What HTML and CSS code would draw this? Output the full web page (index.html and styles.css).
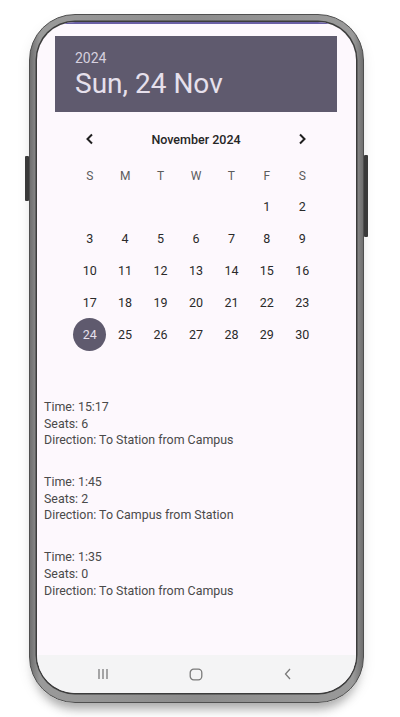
FILE: index.html
```html
<!DOCTYPE html>
<html>
<head>
<meta charset="utf-8">
<link rel="stylesheet" href="styles.css">
</head>
<body>
<div class="stage">
  <div class="phone">
    <span class="btn btn-left"></span>
    <span class="btn btn-right"></span>
    <div class="screen">
      <div class="topline"></div>
      <div class="header">
        <div class="year">2024</div>
        <div class="date">Sun, 24 Nov</div>
      </div>
      <div class="calendar">
        <div class="month-row">
          <span class="chev"><svg width="10" height="12" viewBox="0 0 10 12"><path d="M7 1.5 L2.5 6 L7 10.5" fill="none" stroke="#1f1f1f" stroke-width="2"/></svg></span>
          <span class="month">November 2024</span>
          <span class="chev"><svg width="10" height="12" viewBox="0 0 10 12"><path d="M3 1.5 L7.5 6 L3 10.5" fill="none" stroke="#1f1f1f" stroke-width="2"/></svg></span>
        </div>
        <div class="grid weekdays">
          <span>S</span><span>M</span><span>T</span><span>W</span><span>T</span><span>F</span><span>S</span>
        </div>
        <div class="grid days">
          <span></span><span></span><span></span><span></span><span></span><span>1</span><span>2</span>
          <span>3</span><span>4</span><span>5</span><span>6</span><span>7</span><span>8</span><span>9</span>
          <span>10</span><span>11</span><span>12</span><span>13</span><span>14</span><span>15</span><span>16</span>
          <span>17</span><span>18</span><span>19</span><span>20</span><span>21</span><span>22</span><span>23</span>
          <span><b class="sel">24</b></span><span>25</span><span>26</span><span>27</span><span>28</span><span>29</span><span>30</span>
        </div>
      </div>
      <div class="list">
        <div class="item">
          <div>Time: 15:17</div>
          <div>Seats: 6</div>
          <div>Direction: To Station from Campus</div>
        </div>
        <div class="item">
          <div>Time: 1:45</div>
          <div>Seats: 2</div>
          <div>Direction: To Campus from Station</div>
        </div>
        <div class="item">
          <div>Time: 1:35</div>
          <div>Seats: 0</div>
          <div>Direction: To Station from Campus</div>
        </div>
      </div>
      <div class="navbar">
        <svg width="12" height="12" viewBox="0 0 12 12"><path d="M2 1v10M6 1v10M10 1v10" stroke="#7a7a7a" stroke-width="1.3"/></svg>
        <svg width="14" height="13" viewBox="0 0 14 13"><rect x="1.2" y="1.2" width="11.6" height="10.6" rx="3.5" fill="none" stroke="#7a7a7a" stroke-width="1.3"/></svg>
        <svg width="10" height="12" viewBox="0 0 10 12"><path d="M7 1 L2.5 6 L7 11" fill="none" stroke="#7a7a7a" stroke-width="1.3"/></svg>
      </div>
    </div>
  </div>
</div>
</body>
</html>
```

FILE: styles.css
```css
html, body {
  margin: 0;
  padding: 0;
  background: #ffffff;
}
body {
  width: 400px;
  height: 717px;
  overflow: hidden;
  font-family: Roboto, "Noto Sans", sans-serif;
}
.stage {
  padding: 14px 0 0 29px;
}
.phone {
  position: relative;
  width: 335px;
  height: 689px;
  box-sizing: border-box;
  padding: 7px 7px 9px 7px;
  border-radius: 46px;
  background: linear-gradient(90deg, #6f6f6f, #9a9a9a 3%, #8c8c8c 50%, #9a9a9a 97%, #6f6f6f);
  border: 1.5px solid #4f4f4f;
  box-shadow: 0 12px 10px -6px rgba(0,0,0,0.28), 0 6px 14px rgba(0,0,0,0.08);
}
.btn {
  position: absolute;
  width: 4px;
  background: #3a3a3a;
  border-radius: 1px;
}
.btn-left {
  left: -5px;
  top: 141px;
  height: 45px;
}
.btn-right {
  right: -5px;
  top: 140px;
  height: 82px;
}
.screen {
  height: 100%;
  border-radius: 38px;
  background: #fdf8fd;
  overflow: hidden;
  display: flex;
  flex-direction: column;
  box-shadow: 0 0 0 1.5px #3c3c3c;
}
.topline {
  height: 2px;
  background: #6a5fa6;
}
.header {
  margin: 12px 19px 0 18px;
  height: 76px;
  box-sizing: border-box;
  background: #5f5a6e;
  padding: 14px 0 0 20px;
  color: #e6e0ec;
}
.year {
  font-size: 14px;
  line-height: 16px;
  color: #d6d0df;
}
.date {
  font-size: 28px;
  line-height: 32px;
  margin-top: 2px;
}
.calendar {
  margin: 15px 36px 0 35px;
}
.month-row {
  display: grid;
  grid-template-columns: 35.4px 1fr 35.4px;
  align-items: center;
  height: 24px;
  justify-items: center;
}
.chev {
  display: flex;
}
.month {
  font-size: 12.5px;
  font-weight: 500;
  color: #262626;
}
.grid {
  display: grid;
  grid-template-columns: repeat(7, 1fr);
  justify-items: center;
  align-items: center;
}
.weekdays {
  margin-top: 11px;
  height: 28px;
  font-size: 12px;
  color: #5c5c5c;
}
.days {
  grid-auto-rows: 32.2px;
  font-size: 12.5px;
  color: #2a2a2a;
}
.days span {
  display: flex;
  align-items: center;
  justify-content: center;
}
.sel {
  font-weight: 400;
  width: 33px;
  height: 33px;
  border-radius: 50%;
  background: #5f5a6e;
  color: #e6e0ec;
  display: flex;
  align-items: center;
  justify-content: center;
}
.list {
  flex: 1;
  padding: 48px 0 0 7px;
  font-size: 12.4px;
  line-height: 16.7px;
  color: #4a4a4a;
}
.item {
  margin-bottom: 25px;
}
.navbar {
  height: 38px;
  background: #f4f4f5;
  display: flex;
  align-items: center;
  justify-content: space-between;
  padding: 0 63px 0 60px;
}
```
